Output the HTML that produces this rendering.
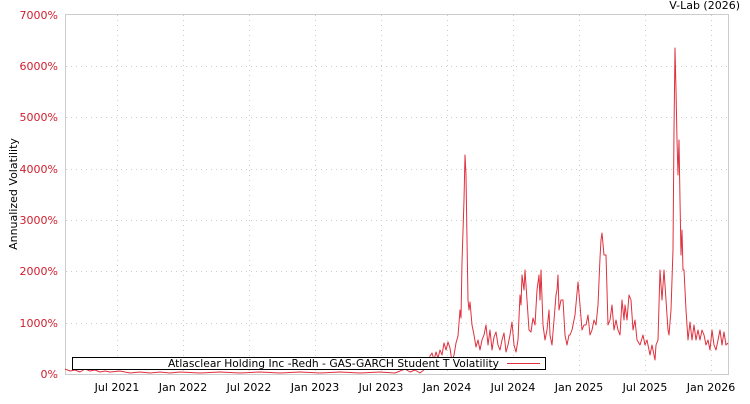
<!DOCTYPE html>
<html><head><meta charset="utf-8"><style>
body{margin:0;background:#fff;width:750px;height:400px;overflow:hidden;font-family:"DejaVu Sans","Liberation Sans",sans-serif}
</style></head><body>
<svg width="750" height="400" xmlns="http://www.w3.org/2000/svg" font-family="DejaVu Sans, Liberation Sans, sans-serif">
<rect x="65.5" y="14.5" width="663" height="360" fill="#fff" stroke="#ccc"/>
<g stroke="#ccc" stroke-dasharray="1,4" stroke-width="1">
<line x1="66" x2="728" y1="66.5" y2="66.5"/><line x1="66" x2="728" y1="117.5" y2="117.5"/><line x1="66" x2="728" y1="169.5" y2="169.5"/><line x1="66" x2="728" y1="220.5" y2="220.5"/><line x1="66" x2="728" y1="271.5" y2="271.5"/><line x1="66" x2="728" y1="323.5" y2="323.5"/>
<line y1="15" y2="374" x1="117.5" x2="117.5"/><line y1="15" y2="374" x1="183.5" x2="183.5"/><line y1="15" y2="374" x1="249.5" x2="249.5"/><line y1="15" y2="374" x1="315.5" x2="315.5"/><line y1="15" y2="374" x1="381.5" x2="381.5"/><line y1="15" y2="374" x1="447.5" x2="447.5"/><line y1="15" y2="374" x1="513.5" x2="513.5"/><line y1="15" y2="374" x1="579.5" x2="579.5"/><line y1="15" y2="374" x1="645.5" x2="645.5"/><line y1="15" y2="374" x1="711.5" x2="711.5"/>
</g>
<g fill="#d0202e" font-size="11" text-anchor="end">
<text x="58" y="19">7000%</text><text x="58" y="70">6000%</text><text x="58" y="121">5000%</text><text x="58" y="173">4000%</text><text x="58" y="224">3000%</text><text x="58" y="275">2000%</text><text x="58" y="327">1000%</text><text x="58" y="378">0%</text>
</g>
<g fill="#000" font-size="11" text-anchor="middle">
<text x="117" y="391">Jul 2021</text><text x="183" y="391">Jan 2022</text><text x="249" y="391">Jul 2022</text><text x="315" y="391">Jan 2023</text><text x="381" y="391">Jul 2023</text><text x="447" y="391">Jan 2024</text><text x="513" y="391">Jul 2024</text><text x="579" y="391">Jan 2025</text><text x="645" y="391">Jul 2025</text><text x="711" y="391">Jan 2026</text>
</g>
<text x="740" y="9" font-size="11" text-anchor="end">V-Lab (2026)</text>
<text transform="translate(17,194) rotate(-90)" font-size="11" text-anchor="middle">Annualized Volatility</text>
<polyline fill="none" stroke="#e0303e" stroke-width="1" stroke-linejoin="round" points="65,369 70,371 75,370 80,372 85,369 90,371 95,370 100,372 105,371 110,372 120,371 130,373 140,372 150,373 160,372 170,373 180,372 200,373 220,372 240,373 260,372 280,373 300,372 320,373 340,372 360,373 380,372 395,373 405,369 410,372 415,370 420,373 425,369 428,366 430,356 432,353 434,360 436,352 438,358 440,350 442,355 444,343 446,350 448,342 450,348 452,362 454,355 456,343 458,336 460,310 461,318 462,262 464,200 465,155 466,175 467,240 468,300 469,310 470,302 472,325 474,335 476,347 478,340 480,350 482,340 484,335 486,325 488,345 490,330 492,350 494,337 496,332 498,345 500,350 502,340 504,333 506,352 508,345 510,335 512,322 514,345 516,352 518,340 520,295 521,305 522,275 524,290 525,270 527,300 529,330 531,332 533,318 535,325 537,290 539,275 540,300 541,270 543,325 545,340 547,330 549,310 550,335 552,345 554,320 556,295 557,290 558,275 559,310 561,300 563,300 565,335 567,345 569,335 570,335 572,330 575,315 578,282 580,305 582,330 584,325 586,325 588,315 590,335 592,330 594,320 596,325 598,305 600,258 601,240 602,233 604,255 606,255 608,325 610,320 612,305 614,330 616,320 618,330 620,335 622,300 624,320 625,305 627,320 629,295 631,300 633,330 635,320 637,340 640,345 643,335 645,345 647,340 650,355 652,345 655,360 656,345 658,340 660,270 662,300 664,270 666,300 668,330 669,335 671,310 673,250 674,130 675,48 676,90 677,140 678,175 679,140 680,200 681,255 682,230 683,270 684,270 686,310 688,340 690,322 692,340 694,325 696,340 698,330 700,340 702,330 704,335 706,345 708,340 710,350 712,330 714,345 716,350 718,340 720,330 722,345 724,332 726,345 728,343"/>
<rect x="72.5" y="357.5" width="473" height="12" fill="#fff" stroke="#000"/>
<text x="168" y="367" font-size="11" textLength="331" lengthAdjust="spacingAndGlyphs">Atlasclear Holding Inc -Redh - GAS-GARCH Student T Volatility</text>
<line x1="507" x2="540" y1="363.5" y2="363.5" stroke="#e0303e"/>
</svg>
</body></html>
